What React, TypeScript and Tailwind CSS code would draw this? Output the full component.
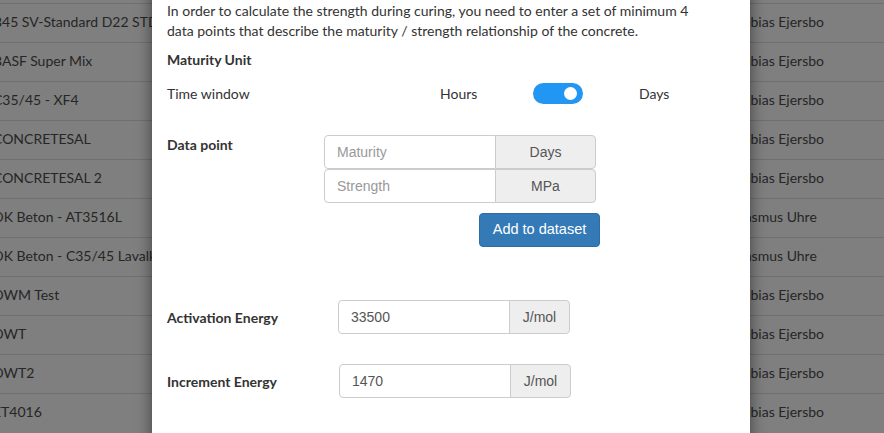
const rows = [
  { name: "B45 SV-Standard D22 STD", owner: "Tobias Ejersbo" },
  { name: "BASF Super Mix", owner: "Tobias Ejersbo" },
  { name: "C35/45 - XF4", owner: "Tobias Ejersbo" },
  { name: "CONCRETESAL", owner: "Tobias Ejersbo" },
  { name: "CONCRETESAL 2", owner: "Tobias Ejersbo" },
  { name: "DK Beton - AT3516L", owner: "Rasmus Uhre" },
  { name: "DK Beton - C35/45 Lavalkali", owner: "Rasmus Uhre" },
  { name: "DWM Test", owner: "Tobias Ejersbo" },
  { name: "DWT", owner: "Tobias Ejersbo" },
  { name: "DWT2", owner: "Tobias Ejersbo" },
  { name: "ET4016", owner: "Tobias Ejersbo" },
];

const sans = "font-['Lato','Inter',sans-serif]";
const helv = "font-['Liberation_Sans',Arial,sans-serif]";

function AddonInput({ value, placeholder, unit, inputW, unitW }: { value?: string; placeholder?: string; unit: string; inputW: string; unitW: string }) {
  return (
    <div className={`flex h-[34px] ${helv} text-[14px]`}>
      <div className={`${inputW} flex items-center rounded-l-[4px] border border-[#ccc] bg-white px-3 ${value ? "text-[#555]" : "text-[#999]"}`}>
        {value ?? placeholder}
      </div>
      <div className={`${unitW} -ml-px flex items-center justify-center rounded-r-[4px] border border-[#ccc] bg-[#eee] text-[#555]`}>{unit}</div>
    </div>
  );
}

export default function App() {
  return (
    <div className={`relative h-[433px] w-[884px] overflow-hidden bg-[#7f7f7f] ${sans}`}>
      <div className="pt-[3px]">
        {rows.map((r) => (
          <div key={r.name} className="flex h-[39px] items-center border-t border-[#6f6f6f] pb-[3px] text-[14px] text-[#262626]">
            <span className="-ml-[7px] w-[743px] shrink-0 whitespace-nowrap">{r.name}</span>
            <span className="whitespace-nowrap">{r.owner}</span>
          </div>
        ))}
      </div>

      <div className="absolute left-[152px] top-[-40px] h-[520px] w-[598px] rounded-[6px] bg-white px-[15px] pt-[41px] text-[14px] text-[#333] shadow-[0_5px_15px_rgba(0,0,0,0.5)]">
        <p className="max-w-[528px] leading-[20px]">
          In order to calculate the strength during curing, you need to enter a set of minimum 4 data points that describe the maturity / strength relationship of the concrete.
        </p>
        <p className="mt-[9px] font-bold leading-[20px]">Maturity Unit</p>
        <div className="mt-[13px] grid h-[20px] grid-cols-[273px_93px_106px_auto] items-center">
          <span>Time window</span>
          <span>Hours</span>
          <span className="relative block h-[21px] w-[50px] rounded-full bg-[#2196f3]">
            <span className="absolute right-[6px] top-[4px] h-[13px] w-[13px] rounded-full bg-white" />
          </span>
          <span>Days</span>
        </div>

        <div className="mt-[32px] flex">
          <span className="w-[157px] font-bold leading-[20px]">Data point</span>
          <div className="flex flex-col">
            <AddonInput placeholder="Maturity" unit="Days" inputW="w-[172px]" unitW="w-[101px]" />
            <AddonInput placeholder="Strength" unit="MPa" inputW="w-[172px]" unitW="w-[101px]" />
            <div className="mt-[10px] flex justify-end">
              <button className={`-mr-[4px] h-[34px] w-[121px] rounded-[4px] border border-[#2e6da4] bg-[#337ab7] ${helv} text-[14.5px] text-white`}>
                Add to dataset
              </button>
            </div>
          </div>
        </div>

        <div className="mt-[53px] flex items-center">
          <span className="w-[171px] font-bold">Activation Energy</span>
          <AddonInput value="33500" unit="J/mol" inputW="w-[172px]" unitW="w-[61px]" />
        </div>
        <div className="mt-[30px] flex items-center">
          <span className="w-[172px] font-bold">Increment Energy</span>
          <AddonInput value="1470" unit="J/mol" inputW="w-[172px]" unitW="w-[61px]" />
        </div>
      </div>
    </div>
  );
}
